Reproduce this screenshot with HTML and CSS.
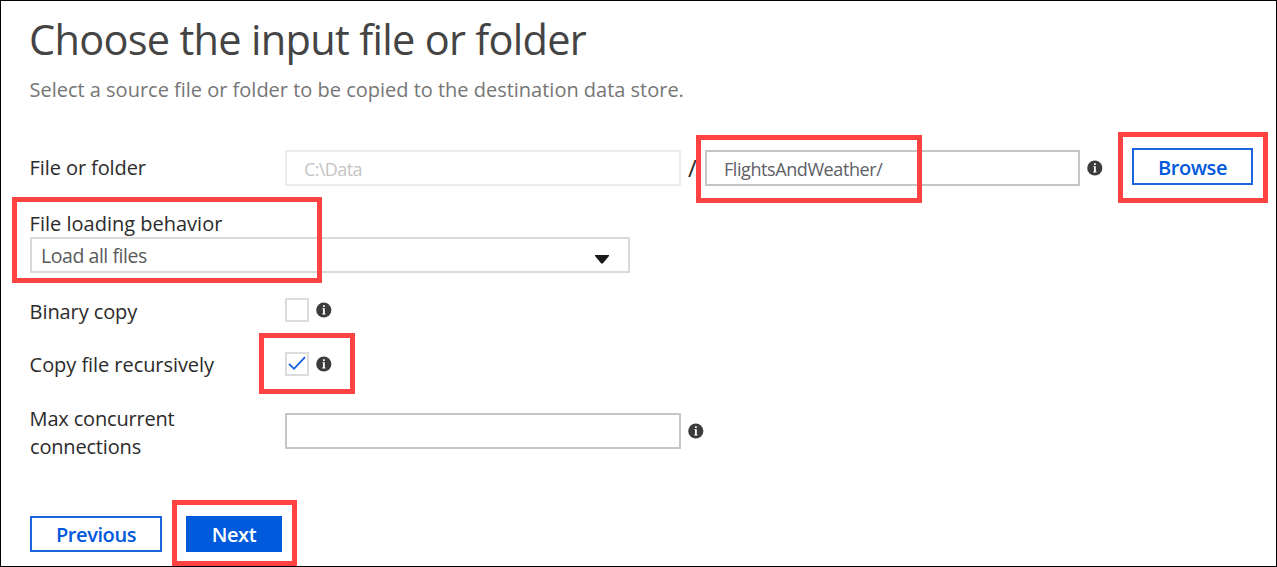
FILE: index.html
```html
<!DOCTYPE html>
<html lang="en">
<head>
<meta charset="utf-8">
<title>Choose the input file or folder</title>
<link rel="stylesheet" href="styles.css">
</head>
<body>
<svg width="0" height="0" class="defs">
  <symbol id="info" viewBox="0 0 16 16">
    <circle cx="7.8" cy="8" r="7.6" fill="#3c3c3c"/>
    <path d="M7 3.3h1.8v1.7H7zM6.3 6.2h2.5v5.3h.7v.9H6.2v-.9H7V7.1h-.7z" fill="#fff"/>
  </symbol>
</svg>
<main class="page">
  <h1 class="title"><span>Choose the input file or folder</span></h1>
  <p class="subtitle"><span>Select a source file or folder to be copied to the destination data store.</span></p>

  <div class="row row-path">
    <label class="label"><span>File or folder</span></label>
    <div class="field field-disabled"><span>C:\Data</span></div>
    <span class="slash">/</span>
    <div class="field field-path"><span>FlightsAndWeather/</span><i class="mark mark-path"></i></div>
    <svg class="info"><use href="#info"/></svg>
    <button class="btn btn-browse"><span class="t-browse">Browse</span><i class="mark mark-browse"></i></button>
  </div>

  <div class="behavior">
    <label class="behavior-label"><span>File loading behavior</span></label>
    <div class="select"><span class="t-load">Load all files</span>
      <svg class="caret" viewBox="0 0 14 9"><path d="M0 0h14v1L7.8 8.5H6.2L0 1z" fill="#1b1b1b"/></svg>
    </div>
    <i class="mark mark-behavior"></i>
  </div>

  <div class="row row-binary">
    <label class="label"><span>Binary copy</span></label>
    <span class="check"></span>
    <svg class="info"><use href="#info"/></svg>
  </div>

  <div class="row row-recursive">
    <label class="label"><span>Copy file recursively</span></label>
    <span class="check"><svg class="tick" viewBox="0 0 20 20"><path d="M2 9.8l5 5L18 3.2" fill="none" stroke="#0f5fe0" stroke-width="1.8"/></svg><i class="mark mark-check"></i></span>
    <svg class="info"><use href="#info"/></svg>
  </div>

  <div class="row row-max">
    <label class="label"><span>Max concurrent</span><br><span>connections</span></label>
    <div class="field field-max"></div>
    <svg class="info"><use href="#info"/></svg>
  </div>

  <div class="footer">
    <button class="btn btn-prev"><span>Previous</span></button>
    <button class="btn btn-next"><span>Next</span><i class="mark mark-next"></i></button>
  </div>
</main>
</body>
</html>
```
FILE: styles.css
```css
* { box-sizing: border-box; }
body { margin: 0; background: #fff; font-family: "Open Sans", "Noto Sans", sans-serif; font-size: 20px; color: #2b2b2b; }
.defs { display: block; position: absolute; }
.page { width: 1277px; height: 567px; border: 1px solid #000; padding: 0 0 0 29px; overflow: hidden; }
.page span { white-space: nowrap; }
.title { margin: 0 0 0 -1px; padding-top: 10px; height: 73px; font-size: 41.5px; line-height: 56px; font-weight: 400; color: #444; letter-spacing: -0.7px; }
.subtitle { margin: 0 0 0 -0.5px; height: 75px; line-height: 30px; padding-top: 1px; color: #767676; letter-spacing: -0.01px; }

.row { display: flex; align-items: center; }
.label { width: 255px; flex: none; line-height: 28px; letter-spacing: -0.1px; text-indent: -0.4px; }
.field { height: 36px; border: 2px solid #c6c6c6; flex: none; display: flex; align-items: center; padding: 2px 0 0 17px; font-size: 18px; line-height: 24px; position: relative; }
.field-disabled { width: 396px; border-color: #ececec; color: #c4c4c4; letter-spacing: -0.6px; }
.field-path { width: 375px; color: #5d6065; letter-spacing: -0.42px; }
.field-max { width: 396px; }
.slash { width: 24px; padding-left: 7px; font-size: 24px; line-height: 28px; }
.info { width: 16px; height: 16px; margin-left: 7px; flex: none; display: block; }

.btn { position: relative; display: flex; align-items: center; justify-content: center; height: 37px; margin: 0; padding: 0; border: 2px solid #1a66de; background: #fff; color: #0058dc; font: 600 20px/28px "Open Sans", "Noto Sans", sans-serif; letter-spacing: -0.4px; }
.btn-browse { width: 121px; margin: 0 0 2px 29px; }
.t-browse { padding-top: 2px; }
.row-path { height: 37px; }
.row-path .label { padding-top: 1px; }

.behavior { position: relative; margin-top: 24px; height: 88px; }
.behavior-label { display: block; height: 27px; line-height: 28px; text-indent: -0.4px; }
.select { display: flex; align-items: center; justify-content: space-between; width: 600px; height: 36px; border: 2px solid #dadada; padding: 0 19px 0 9px; color: #5a5a5a; }
.t-load { font-size: 19.5px; letter-spacing: -0.45px; }
.caret { width: 14px; height: 9px; margin-top: 9px; }

.row-binary { height: 24px; }
.row-binary .label { padding-top: 3px; }
.row-recursive { height: 24px; margin-top: 30px; }
.row-recursive .label { padding-top: 2px; letter-spacing: -0.06px; }
.row-recursive .info { margin-bottom: 1px; }
.check { position: relative; width: 24px; height: 24px; border: 2px solid #dcdcdc; flex: none; }
.tick { display: block; width: 20px; height: 20px; }
.row-max { height: 56px; margin-top: 28px; }
.row-max .label { padding-top: 2px; letter-spacing: -0.18px; }
.field-max { margin-bottom: 2px; }
.row-max .info { margin-bottom: 3px; }

.footer { display: flex; gap: 24px; margin-top: 56px; }
.footer .btn { height: 36px; }
.btn-prev { width: 132px; }
.btn-next { width: 96px; background: #005bdc; border-color: #005bdc; color: #fff; }
.footer span { padding-top: 2px; }

.mark { position: absolute; border: 5px solid #ff4343; pointer-events: none; }
.mark-path { left: -11px; top: -17px; width: 226px; height: 68px; }
.mark-browse { left: -16px; top: -18px; width: 150px; height: 71px; }
.mark-behavior { left: -18px; top: -13px; width: 310px; height: 86px; }
.mark-check { left: -28px; top: -21px; width: 96px; height: 61px; }
.mark-next { left: -16px; top: -18px; width: 125px; height: 66px; }
```
